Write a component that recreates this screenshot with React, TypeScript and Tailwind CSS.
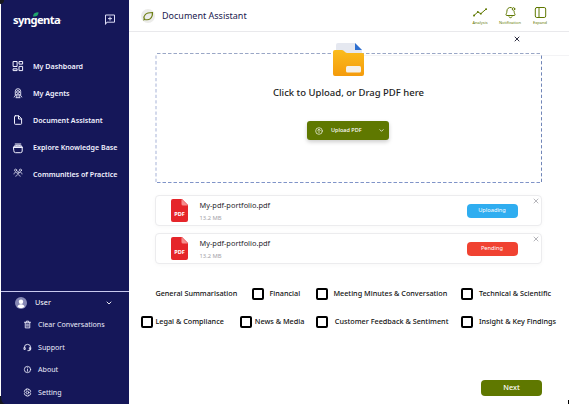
import React from "react";

const font = "font-['Noto_Sans','Open_Sans',sans-serif]";

const Svg = ({ className, box = "0 0 12 12", children, sw = 1 }: { className: string; box?: string; children: React.ReactNode; sw?: number }) => (
  <svg viewBox={box} className={className} fill="none" stroke="currentColor" strokeWidth={sw} strokeLinecap="round" strokeLinejoin="round">
    {children}
  </svg>
);

const nav = [
  {
    label: "My Dashboard",
    icon: (
      <Svg className="size-[12px]">
        <path d="M1.5 1.5h3.6v5H1.5zM7.400 1.500h3.200v2.600H7.400zM7.400 6.400h3.200v4.200H7.400zM1.500 8.800h3.600v1.800H1.500z" />
      </Svg>
    ),
  },
  {
    label: "My Agents",
    icon: (
      <Svg className="size-[12px]" sw={0.9}>
        <circle cx="6" cy="5" r="1.400" />
        <path d="M3.300 7.600V4.400a2.700 2.700 0 0 1 5.400 0v3.200M2.300 10l1.500-2.200h4.400L9.700 10M4 10.700h4M4.800 8v2.200M7.200 8v2.200" />
      </Svg>
    ),
  },
  {
    label: "Document Assistant",
    icon: (
      <Svg className="size-[12px]">
        <path d="M3.300 1.800h3.400l2.900 2.900v4.800a.8.8 0 0 1-.8.8H3.300a.8.8 0 0 1-.8-.8V2.600a.8.800 0 0 1 .8-.8zM6.500 2v3h3" />
      </Svg>
    ),
  },
  {
    label: "Explore Knowledge Base",
    icon: (
      <Svg className="size-[12px]">
        <path d="M3.200 2h5.600M2.200 3.900c.5-1 7.100-1 7.600 0" />
        <path d="M1.800 5h8.400v4a1.700 1.700 0 0 1-1.700 1.700h-5A1.700 1.700 0 0 1 1.800 9z" />
        <path d="M2 5.300h8" strokeWidth="1.600" />
      </Svg>
    ),
  },
  {
    label: "Communities of Practice",
    icon: (
      <Svg className="size-[12px] -translate-y-[2px]" sw={0.7}>
        <circle cx="3.600" cy="3.200" r="1.100" />
        <circle cx="8.400" cy="3.200" r="1.100" />
        <circle cx="6" cy="5.600" r="1.100" />
        <path d="M2 7c.2-1.800 1.400-2.200 2.200-1.600M10 7c-.2-1.800-1.400-2.200-2.200-1.600M3.800 9.300c.3-2.200 4.100-2.200 4.400 0" />
      </Svg>
    ),
  },
];

const userMenu = [
  {
    label: "Clear Conversations",
    icon: (
      <Svg className="size-[9px]" sw={1.2}>
        <path d="M2 3h8M4.500 2.800V1.500h3v1.300M3 3.200v7.300h6V3.200M5.200 5.200v3.200M6.800 5.200v3.200" />
      </Svg>
    ),
  },
  {
    label: "Support",
    icon: (
      <Svg className="size-[9px]" sw={1.2}>
        <path d="M1.800 6.500V6a4.200 4.200 0 0 1 8.400 0v2.200a2 2 0 0 1-2 2H6.500M1.800 6.200h1.200v2.400H1.800zM9 6.200h1.200v2.400H9z" />
      </Svg>
    ),
  },
  {
    label: "About",
    icon: (
      <Svg className="size-[9px]" sw={1.1}>
        <circle cx="6" cy="6" r="4.200" />
        <path d="M6 5.700v2.600M6 3.700v.1" />
      </Svg>
    ),
  },
  {
    label: "Setting",
    icon: (
      <Svg className="size-[9px]" sw={1.1}>
        <path d="M4.800 1.200h2.400l.4 1.500 1.500-.4 1.200 2L9.200 6l1.100 1.700-1.200 2-1.500-.4-.4 1.500H4.800l-.4-1.500-1.500.4-1.200-2L2.800 6 1.700 4.300l1.200-2 1.500.4z" />
        <circle cx="6" cy="6" r="1.700" />
      </Svg>
    ),
  },
];

const Sidebar = () => (
  <aside className="ml-px flex h-[404px] w-[128px] shrink-0 flex-col bg-[#151759] text-white">
    <div className="flex h-[38px] items-start justify-between pt-[12px] pr-[13px] pl-[12px]">
      <div className="relative flex h-[15px] items-center text-[11.200px] leading-[15px] font-bold tracking-[-0.600px]">
        syngenta<span className="text-[5px] font-normal">.</span>
        <svg viewBox="0 0 6 5" className="absolute top-0 left-[20px] h-[5px] w-[6px]">
          <path d="M0 4.500C0 1.500 2 .3 5.500.2 5.600 3 4 4.600 0 4.500z" fill="#1fa56b" />
        </svg>
      </div>
      <Svg className="mt-[1px] size-[12px] text-[#dcdcf5]">
        <path d="M1.500 11V2h9v7.200H3.200z" />
        <path d="M6 4v3.200M4.400 5.600h3.200" />
      </Svg>
    </div>
    <nav className="flex flex-col pt-[14.500px]">
      {nav.map((n) => (
        <div key={n.label} className="flex h-[27.200px] items-center gap-[9px] pl-[11px] text-[#f2f2ff]">
          {n.icon}
          <span className="text-[7.100px] leading-none font-semibold whitespace-nowrap">{n.label}</span>
        </div>
      ))}
    </nav>
    <div className="mt-auto flex h-[113px] flex-col border-t border-[#c9c9ef]">
      <div className="flex h-[21.500px] items-center pl-[14px]">
        <svg viewBox="0 0 12 12" className="size-[12px]">
          <circle cx="6" cy="6" r="6" fill="#8789b5" />
          <circle cx="6" cy="4.800" r="2.200" fill="#fff" />
          <path d="M2.500 9.800c.4-3.400 6.600-3.400 7 0-1.800 1.700-5.200 1.700-7 0z" fill="#fff" />
        </svg>
        <span className="ml-[8px] text-[7.300px] leading-none">User</span>
        <Svg className="mr-[17px] ml-auto size-[6px]" sw={1.800}>
          <path d="m2 4 4 4 4-4" />
        </Svg>
      </div>
      {userMenu.map((m) => (
        <div key={m.label} className="flex h-[22.500px] items-center gap-[6px] pl-[22px] text-[#ececfa]">
          {m.icon}
          <span className="text-[7.100px] leading-none whitespace-nowrap">{m.label}</span>
        </div>
      ))}
    </div>
  </aside>
);

const Header = () => (
  <header className="flex h-[32px] items-center border-b border-[#e9e9ec] pr-[14px] pl-[12px]">
    <svg viewBox="0 0 14 14" className="size-[14px]">
      <circle cx="7" cy="7" r="7" fill="#ececea" />
      <path d="M3.200 10.200c-1-3.700 1-6.500 8.300-6.700.2 5.500-3 8.500-8.300 6.700zM2.500 11.300l1.500-1.800" fill="none" stroke="#6c7e12" strokeWidth="1.100" />
    </svg>
    <h1 className="ml-[7px] text-[9px] leading-none text-[#211a4f]">Document Assistant</h1>
    <div className="ml-auto flex text-[#5f7800]">
      <div className="flex w-[30px] flex-col items-center gap-px">
        <Svg className="h-[13px] w-[14px]" box="0 0 14 13">
          <path d="m1 9.500 3.800-3.500 3 1.700 5.200-4.500" />
          <path d="M1 9.500h.2M4.800 6h.1M7.800 7.700h.1M13 3.200h.1" strokeWidth="1.800" />
        </Svg>
        <span className="text-[4px] leading-[5px]">Analysis</span>
      </div>
      <div className="flex w-[30px] flex-col items-center gap-px">
        <Svg className="h-[13px] w-[13px]" box="0 0 13 13">
          <path d="M7.300 1.500C4.500.9 2.900 3 2.900 5.200c0 2-.9 2.700-.9 3.500 0 .6.400.8 1 .8h7c.6 0 1-.2 1-.8 0-.8-.9-1.500-.9-3.200M5 10.800c.4 1.300 2.600 1.300 3 0" />
          <circle cx="9.500" cy="3" r="1.300" />
        </Svg>
        <span className="text-[4px] leading-[5px]">Notification</span>
      </div>
      <div className="flex w-[30px] flex-col items-center gap-px">
        <Svg className="h-[13px] w-[13px]" box="0 0 13 13">
          <rect x="1.300" y="1.500" width="10.400" height="10" rx="1.500" />
          <path d="M5 1.500v10" />
        </Svg>
        <span className="text-[4px] leading-[5px]">Expand</span>
      </div>
    </div>
  </header>
);

const FileRow = ({ status, color }: { status: string; color: string }) => (
  <div className="relative flex h-[31px] items-center rounded-[4px] border border-[#ececee] bg-white pl-[14.500px] shadow-[0_1px_4px_rgba(0,0,0,0.03)]">
    <svg viewBox="0 0 17 23" className="h-[23px] w-[17px]">
      <path d="M2 0h9l6 6v15a2 2 0 0 1-2 2H2a2 2 0 0 1-2-2V2a2 2 0 0 1 2-2z" fill="#e5252a" />
      <path d="M10.500 0 17 6.500h-5a1.500 1.500 0 0 1-1.500-1.500z" fill="#f58d8d" />
      <text x="8.500" y="16.800" textAnchor="middle" fontSize="5.600" fontWeight="700" fill="#fff">PDF</text>
    </svg>
    <div className="ml-[12px] flex flex-col gap-[6px]">
      <span className="text-[7.400px] leading-[8px] text-[#26262c]">My-pdf-portfolio.pdf</span>
      <span className="text-[5.800px] leading-[6px] text-[#a2a2a8]">13.2 MB</span>
    </div>
    <div className={"mr-[23.500px] ml-auto flex h-[14px] w-[51px] items-center justify-center rounded-[4px] text-[5.700px] leading-none text-white " + color}>{status}</div>
    <Svg className="absolute top-[2px] right-[2px] size-[6px] text-[#8f8f98]" sw={1.300}>
      <path d="m2 2 8 8M10 2l-8 8" />
    </Svg>
  </div>
);

const Option = ({ label, box = true, className, gap = "gap-[5px]" }: { label: string; box?: boolean; className: string; gap?: string }) => (
  <label className={"flex h-[12px] shrink-0 items-center " + gap + " " + className}>
    {box && <span className="size-[12px] shrink-0 rounded-[2px] border-2 border-black bg-white" />}
    <span className="text-[7.250px] leading-none font-medium whitespace-nowrap text-[#111]">{label}</span>
  </label>
);

export default function App() {
  return (
    <div className={"relative flex h-[404px] w-[569px] overflow-hidden bg-white " + font}>
      <span className="absolute top-0 left-0 size-[4px] rounded-br-full bg-[#16171f]" />
      <svg viewBox="0 0 5 8" className="absolute bottom-0 left-0 h-[8px] w-[5px]">
        <path d="M0 0h1c0 4 1 7 4 8H0z" fill="#16171f" />
      </svg>
      <span className="absolute right-0 bottom-0 h-[4px] w-px bg-black" />
      <Sidebar />
      <main className="flex w-[440px] flex-col">
        <Header />
        <div className="relative flex h-[21px] items-start justify-end pt-[4px] pr-[49px]">
          <Svg className="size-[6px] text-[#17172d]" sw={1.800}>
            <path d="m2 2 8 8M10 2l-8 8" />
          </Svg>
          <span className="absolute right-0 -bottom-[3px] h-px w-[205px] bg-[#f3f3f5]" />
        </div>
        <section className="relative mr-[27px] ml-[26px] flex h-[130px] flex-col items-center rounded-[3px]">
          <svg className="absolute inset-0 h-full w-full" fill="none">
            <path d="M2 .5h384" stroke="#9aa7c6" strokeDasharray="3.500 2" />
            <path d="M2 129.500h384" stroke="#8094c8" strokeDasharray="3.500 2" />
            <path d="M1 2.500v127" stroke="#d3d9eb" strokeWidth="2" strokeDasharray="3.300 2.300" />
            <path d="M386.500 2.500v127" stroke="#7186b8" strokeDasharray="3.300 2.300" />
          </svg>
          <svg viewBox="0 0 32 34" className="relative mt-[-11px] h-[34px] w-[32px]">
            <defs>
              <linearGradient id="folder" x1="0" y1="0" x2="0" y2="1">
                <stop offset="0" stopColor="#fbbc1c" />
                <stop offset="1" stopColor="#f49b0c" />
              </linearGradient>
            </defs>
            <path d="M5 1h17l7 7v12H3V3a2 2 0 0 1 2-2z" fill="#e5e8f0" />
            <path d="M22 1l7 7h-7z" fill="#2d6fd0" />
            <path d="M2 8h7c2 0 3 3 5 3h15.500a1.500 1.500 0 0 1 1.500 1.500V32a2 2 0 0 1-2 2H2a2 2 0 0 1-2-2V10a2 2 0 0 1 2-2z" fill="url(#folder)" />
            <rect x="13" y="24" width="15" height="6.500" rx="1.500" fill="#f5f0e8" />
          </svg>
          <h2 className="mt-[11px] text-[9.500px] leading-[11px] font-medium text-[#1c1c22]">Click to Upload, or Drag PDF here</h2>
          <button className="mt-[23px] mr-[1px] flex h-[19px] w-[82px] items-center rounded-[3px] bg-[#5f7800] pr-[5px] pl-[8px] text-white shadow-[0_2px_4px_rgba(0,0,0,0.2)]">
            <Svg className="size-[8px]">
              <circle cx="6" cy="6" r="5" />
              <path d="M6 8.500v-5M4 5.300l2-2 2 2" />
            </Svg>
            <span className="ml-[8px] text-[5.500px] leading-none font-medium">Upload PDF</span>
            <Svg className="ml-auto size-[5px]" sw={1.800}>
              <path d="m2 4 4 4 4-4" />
            </Svg>
          </button>
        </section>
        <div className="mt-[12px] mr-[27px] ml-[26px] flex flex-col gap-[7px]">
          <FileRow status="Uploading" color="bg-[#2fadf0]" />
          <FileRow status="Pending" color="bg-[#f04231]" />
        </div>
        <div className="mt-[24px] flex">
          <Option label="General Summarisation" box={false} className="ml-[26.400px] w-[96.600px]" />
          <Option label="Financial" gap="gap-[5.500px]" className="w-[64.400px]" />
          <Option label="Meeting Minutes & Conversation" className="w-[145px]" />
          <Option label="Technical & Scientific" gap="gap-[5.500px]" className="w-[100px]" />
        </div>
        <div className="mt-[16px] flex">
          <Option label="Legal & Compliance" gap="gap-[2.400px]" className="ml-[12px] w-[99px]" />
          <Option label="News & Media" gap="gap-[2.800px]" className="w-[76.400px]" />
          <Option label="Customer Feedback & Sentiment" gap="gap-[6.400px]" className="w-[145px]" />
          <Option label="Insight & Key Findings" gap="gap-[5.500px]" className="w-[100px]" />
        </div>
        <button className="mt-[52px] ml-[352px] flex h-[16px] w-[61px] items-center justify-center rounded-[4px] bg-[#5f7800] text-[7.300px] leading-none font-medium text-white">Next</button>
      </main>
    </div>
  );
}
